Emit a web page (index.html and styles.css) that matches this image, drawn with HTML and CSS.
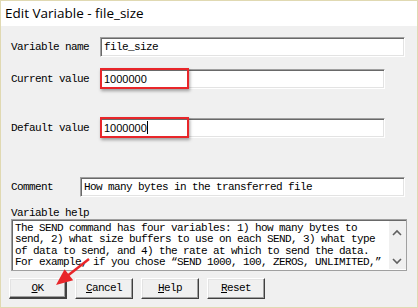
FILE: index.html
```html
<!DOCTYPE html>
<html lang="en">
<head>
  <meta charset="UTF-8">
  <link rel="stylesheet" href="styles.css">
  <title>Edit Variable - file_size</title>
</head>
<body>
  <div class="window">
    <div class="titlebar">Edit Variable - file_size</div>

    <div class="form">
      <!-- name -->
      <div class="row row-name">
        <span class="label">Variable name</span>
        <div class="field wide mono">file_size</div>
      </div>

      <!-- current -->
      <div class="row row-current">
        <span class="label">Current value</span>
        <div class="field narrow sans">1000000<span class="mark"></span></div>
      </div>

      <!-- default -->
      <div class="row row-default">
        <span class="label">Default value</span>
        <div class="field narrow sans">1000000<span class="caret"></span><span class="mark"></span></div>
      </div>

      <!-- comment -->
      <div class="row row-comment">
        <span class="label short">Comment</span>
        <div class="field comment mono">How many bytes in the transferred file</div>
      </div>

      <div class="help-label">Variable help</div>
      <div class="help-box">
        <div class="help-text">The SEND command has four variables: 1) how many bytes to<br>send, 2) what size buffers to use on each SEND, 3) what type<br>of data to send, and 4) the rate at which to send the data.<br>For example, if you chose “SEND 1000, 100, ZEROS, UNLIMITED,”</div>
        <div class="scrollbar">
          <svg width="17" height="50" viewBox="0 0 17 50">
            <path d="M4 14 L8 10 L12 14" fill="none" stroke="#606060" stroke-width="1.6"/>
            <path d="M4 38 L8 42 L12 38" fill="none" stroke="#606060" stroke-width="1.6"/>
          </svg>
        </div>
      </div>

      <div class="buttons">
        <div class="btn default"><u>O</u>K</div>
        <div class="btn"><u>C</u>ancel</div>
        <div class="btn"><u>H</u>elp</div>
        <div class="btn"><u>R</u>eset</div>
      </div>
    </div>

    <!-- annotation arrow pointing at OK -->
    <svg class="pointer" width="418" height="308" viewBox="0 0 418 308">
      <line x1="89" y1="259" x2="66" y2="277" stroke="#e8262a" stroke-width="2.5"/>
      <polygon points="56,285 64.6,269.2 73.2,280.2" fill="#e8262a"/>
    </svg>
  </div>
</body>
</html>
```

FILE: styles.css
```css
body {
  margin: 0;
  padding: 0;
  background: #f0f0f0;
}

.window {
  position: relative;
  width: 418px;
  height: 308px;
  box-sizing: border-box;
  border: 1px solid #e0d9b2;
  background-color: #f0f0f0;
  overflow: hidden;
}

.titlebar {
  height: 25px;
  background: #fff;
  padding-left: 4px;
  font-family: "Open Sans", "Noto Sans", sans-serif;
  font-size: 13.5px;
  line-height: 25px;
  color: #000;
}

.form {
  padding: 0 10px;
  font-family: "Liberation Mono", monospace;
  font-size: 11px;
  letter-spacing: -0.6px;
  color: #000;
}

.row {
  display: flex;
  align-items: center;
  height: 20px;
}

.row-name { margin-top: 11px; }
.row-current { margin-top: 12px; }
.row-default { margin-top: 29px; }
.row-comment { margin-top: 39px; }

.label {
  width: 89px;
  flex-shrink: 0;
}

.label.short {
  width: 69px;
}

.field {
  position: relative;
  box-sizing: border-box;
  height: 20px;
  background: #fff;
  border-top: 1px solid #a0a0a0;
  border-left: 1px solid #a0a0a0;
  border-bottom: 1px solid #fff;
  border-right: 1px solid #fff;
  box-shadow: inset 1px 1px #696969, inset -1px -1px #e3e3e3;
  padding-left: 3px;
  line-height: 18px;
  white-space: nowrap;
}

.field.wide { width: 305px; }
.field.narrow { width: 285px; }
.field.comment { width: 325px; }

.sans {
  font-family: "Liberation Sans", Arial, sans-serif;
  font-size: 11px;
  letter-spacing: 0;
}

.caret {
  display: inline-block;
  width: 1px;
  height: 13px;
  background: #000;
  vertical-align: -2px;
}

.mark {
  position: absolute;
  left: -1px;
  top: -2px;
  width: 89px;
  height: 21px;
  box-sizing: border-box;
  border: 2px solid #e8262a;
  box-shadow: 1px 2px 3px rgba(0, 0, 0, 0.35);
}

.help-label {
  margin-top: 10px;
  height: 12px;
  line-height: 12px;
}

.help-box {
  display: flex;
  box-sizing: border-box;
  width: 396px;
  height: 52px;
  background: #fff;
  border: 1px solid #a0a0a0;
  box-shadow: inset 1px 1px #696969;
}

.help-text {
  flex: 1;
  padding: 3px 0 0 3px;
  line-height: 11.3px;
  white-space: nowrap;
  overflow: hidden;
}

.scrollbar {
  width: 17px;
  background: #f0f0f0;
  margin: 1px 0 1px 0;
}

.scrollbar svg {
  display: block;
}

.buttons {
  display: flex;
  gap: 8px;
  margin-top: 7px;
  margin-left: -2px;
}

.btn {
  box-sizing: border-box;
  width: 58px;
  height: 21px;
  line-height: 19px;
  text-align: center;
  background: #f0f0f0;
  border-top: 1px solid #fff;
  border-left: 1px solid #fff;
  border-bottom: 1px solid #404040;
  border-right: 1px solid #404040;
  box-shadow: inset -1px -1px #a0a0a0, inset 1px 1px #e3e3e3;
}

.btn.default {
  border-bottom-width: 2px;
  border-right-width: 2px;
}

.pointer {
  position: absolute;
  left: -1px;
  top: -1px;
  pointer-events: none;
}
```
